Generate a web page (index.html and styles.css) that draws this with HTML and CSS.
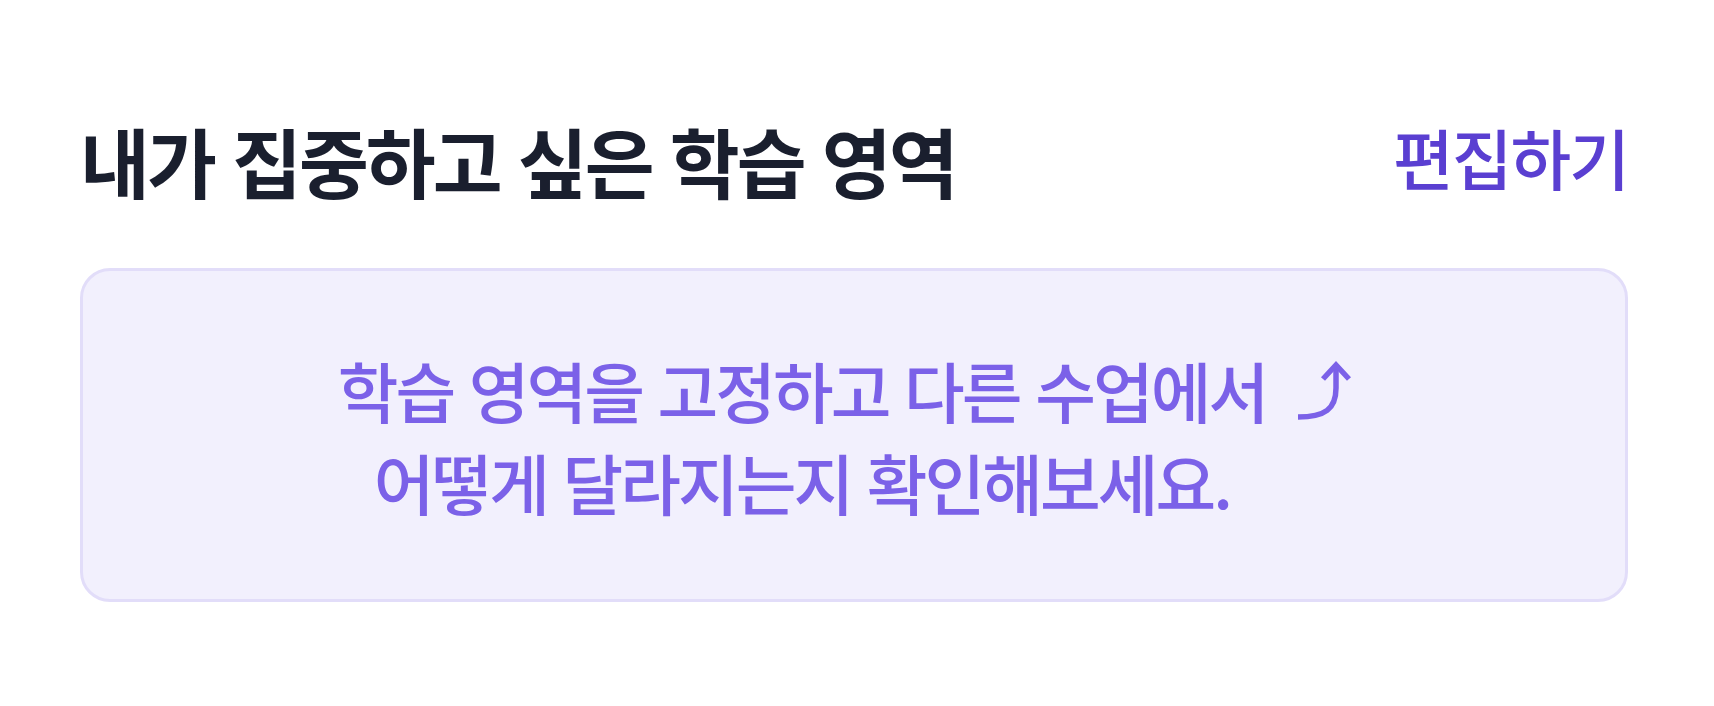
FILE: index.html
```html
<!DOCTYPE html>
<html lang="ko">
<head>
<meta charset="utf-8">
<link rel="stylesheet" href="styles.css">
</head>
<body>
<main class="page">
  <header class="header">
    <h1 class="title">내가 집중하고 싶은 학습 영역</h1>
    <a class="edit" href="#">편집하기</a>
  </header>
  <section class="empty">
    <p class="message">학습 영역을 고정하고 다른 수업에서<br>어떻게 달라지는지 확인해보세요.</p>
    <svg class="arrow" width="76" height="62" viewBox="0 0 76 62" aria-hidden="true">
      <path d="M4 57 C 31 57, 42 49, 42 28 L 42 5" fill="none" stroke="#7b61e8" stroke-width="5.5" stroke-linecap="butt"/>
      <path d="M29 19 L 42 5 L 55 19" fill="none" stroke="#7b61e8" stroke-width="5.5" stroke-linecap="butt"/>
    </svg>
  </section>
</main>
</body>
</html>
```
FILE: styles.css
```css
* { box-sizing: border-box; }
html, body { margin: 0; padding: 0; background: #ffffff; }
body { font-family: "Noto Sans CJK KR", "Noto Sans", sans-serif; }
.page { padding: 100px 86px 0 80px; }
.header { display: flex; align-items: center; justify-content: space-between; height: 120px; }
.title { margin: 0; font-size: 76px; font-weight: 700; color: #1a1f2e; letter-spacing: -0.04em; line-height: 1; }
.edit { margin-bottom: 8px; font-size: 66px; font-weight: 500; color: #5a3fd1; text-decoration: none; letter-spacing: -0.03em; line-height: 1; }
.empty { margin-top: 48px; height: 334px; border: 3px solid #e2ddf9; border-radius: 30px; background: #f2f0fd; display: flex; align-items: center; justify-content: center; gap: 28px; }
.message { margin: 0; text-align: center; font-size: 66px; font-weight: 500; color: #7b61e8; letter-spacing: -0.045em; line-height: 92px; }
.arrow { align-self: center; margin-top: -88px; }
```
